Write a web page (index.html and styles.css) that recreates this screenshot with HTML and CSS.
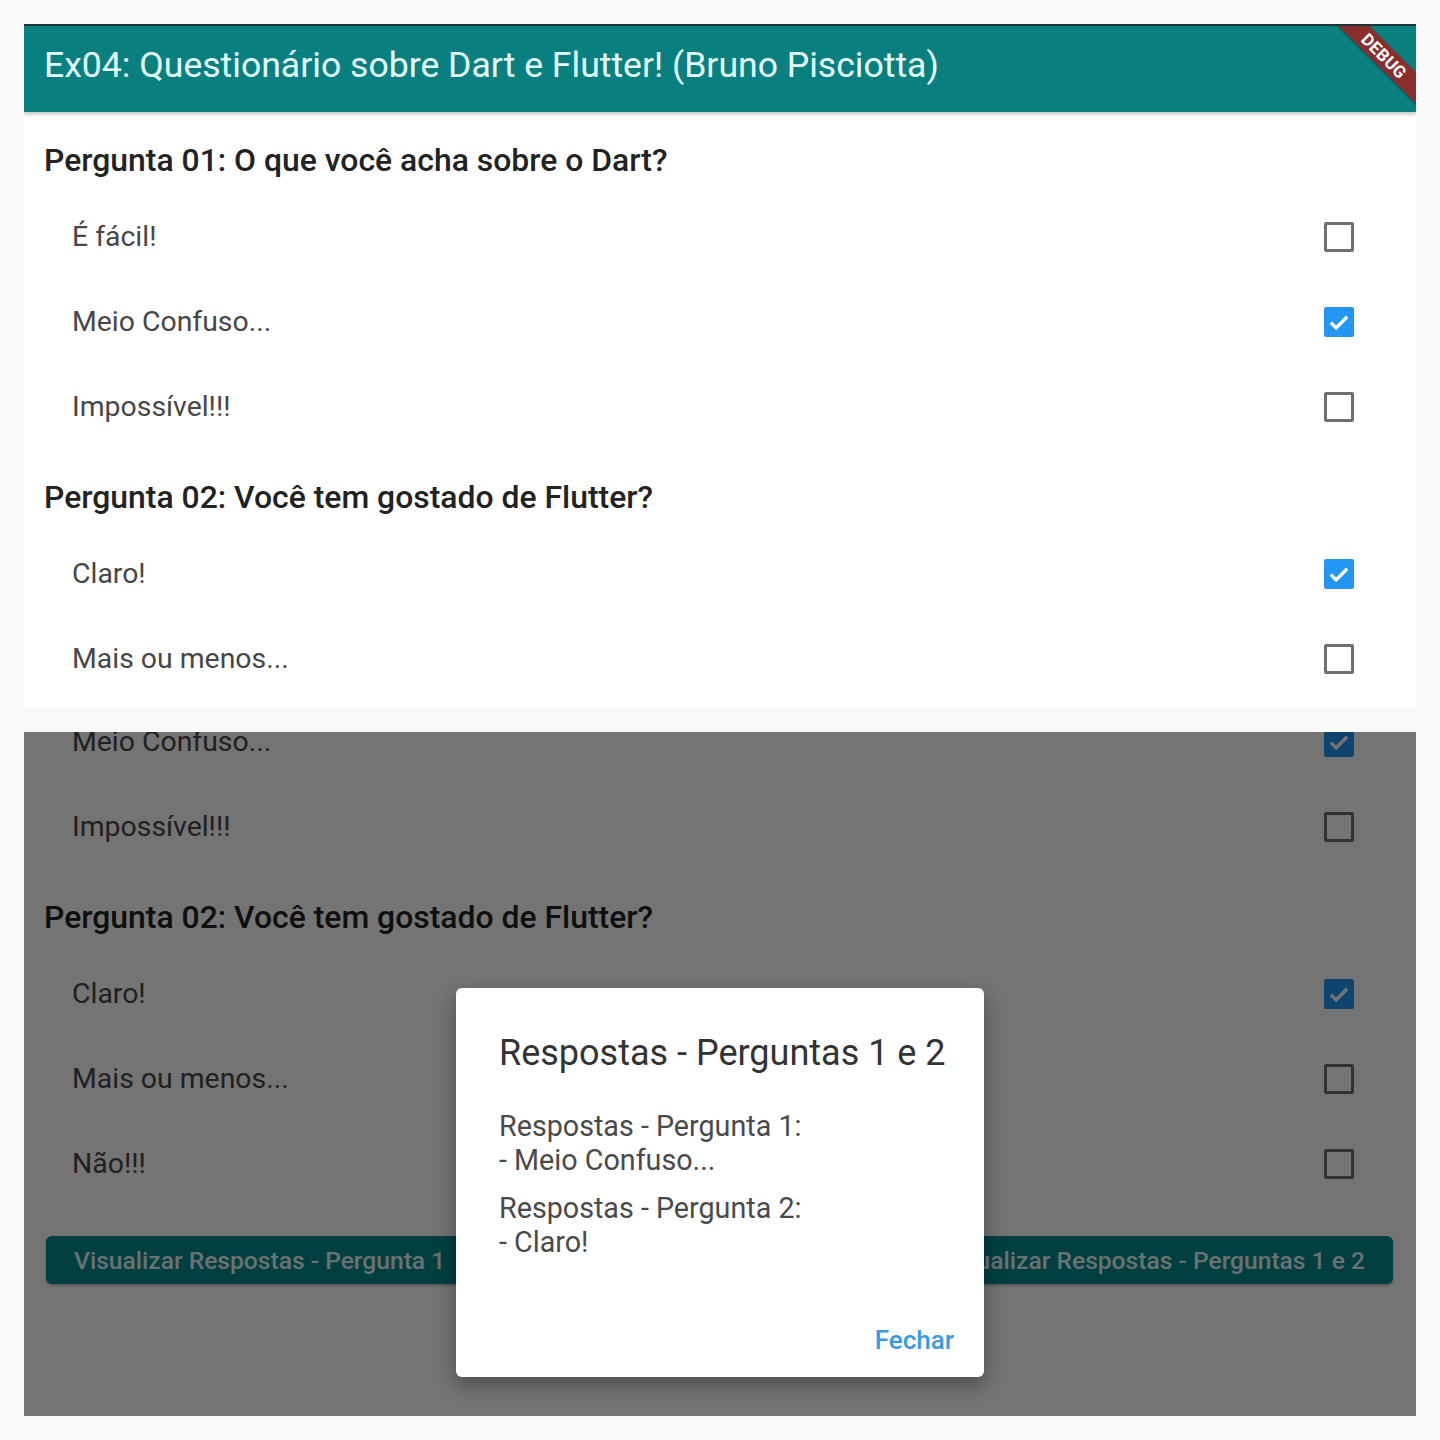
FILE: index.html
```html
<!DOCTYPE html>
<html lang="pt">
<head>
<meta charset="utf-8">
<title>Ex04</title>
<link rel="stylesheet" href="styles.css">
</head>
<body>
<div class="page">
  <section class="screen screen-top">
    <header class="appbar">
      <h1 class="appbar-title">Ex04: Questionário sobre Dart e Flutter! (Bruno Pisciotta)</h1>
      <div class="debug-banner">DEBUG</div>
    </header>
    <div class="list">
      <div class="question">
        <h2 class="q-title">Pergunta 01: O que você acha sobre o Dart?</h2>
        <div class="option"><span class="opt-label">É fácil!</span><span class="cb"></span></div>
        <div class="option"><span class="opt-label">Meio Confuso...</span><span class="cb cb-on"><svg viewBox="0 0 24 24"><path d="M5.5 12.5l4.2 4.2L18.5 7.8"/></svg></span></div>
        <div class="option"><span class="opt-label">Impossível!!!</span><span class="cb"></span></div>
      </div>
      <div class="question">
        <h2 class="q-title">Pergunta 02: Você tem gostado de Flutter?</h2>
        <div class="option"><span class="opt-label">Claro!</span><span class="cb cb-on"><svg viewBox="0 0 24 24"><path d="M5.5 12.5l4.2 4.2L18.5 7.8"/></svg></span></div>
        <div class="option"><span class="opt-label">Mais ou menos...</span><span class="cb"></span></div>
        <div class="option"><span class="opt-label">Não!!!</span><span class="cb"></span></div>
      </div>
      <div class="actions">
        <button class="btn">Visualizar Respostas - Pergunta 1</button>
        <button class="btn btn-mid">Visualizar Respostas - Pergunta 2</button>
        <button class="btn">Visualizar Respostas - Perguntas 1 e 2</button>
      </div>
    </div>
  </section>

  <section class="screen screen-bottom">
    <div class="list list-scrolled">
      <div class="question">
        <h2 class="q-title">Pergunta 01: O que você acha sobre o Dart?</h2>
        <div class="option"><span class="opt-label">É fácil!</span><span class="cb"></span></div>
        <div class="option"><span class="opt-label">Meio Confuso...</span><span class="cb cb-on"><svg viewBox="0 0 24 24"><path d="M5.5 12.5l4.2 4.2L18.5 7.8"/></svg></span></div>
        <div class="option"><span class="opt-label">Impossível!!!</span><span class="cb"></span></div>
      </div>
      <div class="question">
        <h2 class="q-title">Pergunta 02: Você tem gostado de Flutter?</h2>
        <div class="option"><span class="opt-label">Claro!</span><span class="cb cb-on"><svg viewBox="0 0 24 24"><path d="M5.5 12.5l4.2 4.2L18.5 7.8"/></svg></span></div>
        <div class="option"><span class="opt-label">Mais ou menos...</span><span class="cb"></span></div>
        <div class="option"><span class="opt-label">Não!!!</span><span class="cb"></span></div>
      </div>
      <div class="actions">
        <button class="btn">Visualizar Respostas - Pergunta 1</button>
        <button class="btn btn-mid">Visualizar Respostas - Pergunta 2</button>
        <button class="btn">Visualizar Respostas - Perguntas 1 e 2</button>
      </div>
    </div>
    <div class="barrier"></div>
    <div class="dialog">
      <h3 class="dialog-title">Respostas - Perguntas 1 e 2</h3>
      <div class="dialog-body">
        <p>Respostas - Pergunta 1:<br>- Meio Confuso...</p>
        <p>Respostas - Pergunta 2:<br>- Claro!</p>
      </div>
      <div class="dialog-actions"><button class="text-btn">Fechar</button></div>
    </div>
  </section>
</div>
</body>
</html>
```

FILE: styles.css
```css
* { box-sizing: border-box; }

html, body {
  margin: 0;
  padding: 0;
  background: #f9f9f9;
}

body {
  font-family: Roboto, "Noto Sans", "Liberation Sans", sans-serif;
}

.page {
  padding: 24px;
  display: flex;
  flex-direction: column;
  gap: 24px;
}

.screen {
  width: 1392px;
  height: 684px;
  background: #ffffff;
  overflow: hidden;
  position: relative;
}

.appbar {
  height: 88px;
  background: #0a7f80;
  border-top: 2px solid #1c3434;
  display: flex;
  align-items: center;
  padding-left: 20px;
  padding-bottom: 8px;
  position: relative;
  overflow: hidden;
  box-shadow: 0 2px 4px rgba(0, 0, 0, 0.25);
  z-index: 1;
}

.appbar-title {
  margin: 0;
  font-size: 35.6px;
  font-weight: 400;
  color: #e4fffc;
  letter-spacing: 0;
  white-space: nowrap;
}

.debug-banner {
  position: absolute;
  width: 140px;
  height: 22px;
  left: 1290px;
  top: 19px;
  transform: rotate(45deg);
  background: #8a2d2d;
  color: #ffffff;
  font-size: 17px;
  font-weight: 700;
  text-align: center;
  line-height: 22px;
  letter-spacing: 0.3px;
  box-shadow: 0 1px 3px rgba(0, 0, 0, 0.3);
}

.list {
  display: flex;
  flex-direction: column;
}

.list-scrolled {
  margin-top: -200px;
}

.question {
  margin-top: 16px;
  display: flex;
  flex-direction: column;
}

.q-title {
  margin: 0;
  height: 66px;
  display: flex;
  align-items: center;
  padding-left: 20px;
  padding-bottom: 3px;
  font-size: 31.9px;
  font-weight: 500;
  color: #222222;
  white-space: nowrap;
}

.option {
  height: 85px;
  display: flex;
  align-items: center;
  justify-content: space-between;
  padding-left: 48px;
  padding-right: 62px;
}

.opt-label {
  font-size: 28.4px;
  color: #474747;
}

.cb {
  width: 30px;
  height: 30px;
  border: 3px solid #6f6f6f;
  border-radius: 2px;
  display: flex;
  align-items: center;
  justify-content: center;
}

.cb-on {
  border: none;
  background: #2196f3;
}

.cb svg {
  width: 30px;
  height: 30px;
  fill: none;
  stroke: #ffffff;
  stroke-width: 2.8;
}

.actions {
  margin-top: 30px;
  padding: 0 23px 0 22px;
  display: flex;
  justify-content: space-between;
  gap: 2px;
}

.btn {
  flex-shrink: 0;
  height: 48px;
  padding: 0 28px;
  border: none;
  border-radius: 6px;
  background: #008a8a;
  color: #e6fbf8;
  font-family: inherit;
  font-size: 24.6px;
  font-weight: 500;
  white-space: nowrap;
  box-shadow: 0 2px 3px rgba(0, 0, 0, 0.25);
}

.btn-mid {
  flex-shrink: 1;
  min-width: 0;
  overflow: hidden;
}

.barrier {
  position: absolute;
  inset: 0;
  background: rgba(0, 0, 0, 0.545);
}

.dialog {
  position: absolute;
  left: 432px;
  top: 256px;
  width: 528px;
  height: 389px;
  background: #ffffff;
  border-radius: 6px;
  box-shadow: 0 8px 20px rgba(0, 0, 0, 0.35);
  padding: 40px 30px 0 43px;
  display: flex;
  flex-direction: column;
}

.dialog-title {
  margin: 0;
  font-size: 36px;
  font-weight: 400;
  color: #333333;
  line-height: 50px;
}

.dialog-body {
  margin-top: 31px;
  font-size: 28.7px;
  color: #4a4a4a;
  line-height: 34px;
}

.dialog-body p {
  margin: 0 0 14px 0;
}

.dialog-actions {
  margin-top: auto;
  height: 49px;
  display: flex;
  justify-content: flex-end;
  align-items: flex-start;
}

.text-btn {
  border: none;
  background: none;
  padding: 0;
  font-family: inherit;
  font-size: 26px;
  font-weight: 500;
  color: #3a9ae6;
  line-height: 48px;
  margin-top: -12px;
}
```
